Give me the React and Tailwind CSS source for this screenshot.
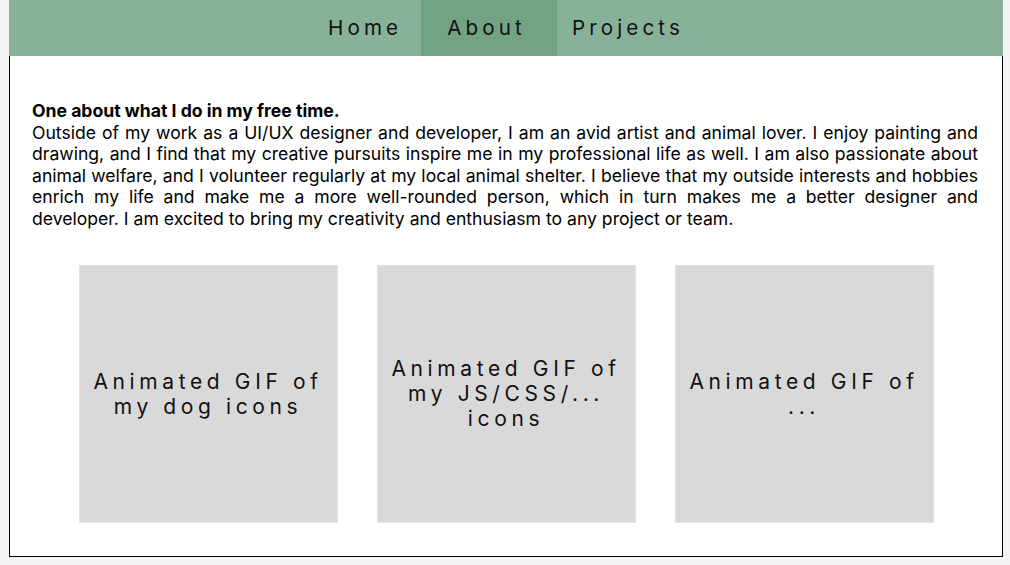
import React from 'react';

const tabs = [
  { label: 'Home', pad: 'pl-[18px] pr-[19px]', active: false },
  { label: 'About', pad: 'pl-[26px] pr-[31px]', active: true },
  { label: 'Projects', pad: 'pl-[15px] pr-[18px]', active: false },
];

const gifs = [
  'Animated GIF of my dog icons',
  'Animated GIF of my JS/CSS/... icons',
  'Animated GIF of ...',
];

export default function App() {
  return (
    <div className="h-[565px] w-full bg-[#f4f4f4] font-['Inter',_'Noto_Sans',_sans-serif] text-black">
      <div className="ml-[9px] w-[994px] h-[557px] bg-white border-x border-b border-black flex flex-col">
        <nav className="h-[56px] -mx-px bg-[#88b19a] flex justify-center">
          {tabs.map((t) => (
            <a
              key={t.label}
              className={`h-full flex items-center ${t.pad} text-[20.6px] tracking-[0.2em] text-[#111] ${
                t.active ? 'bg-[#73a385]' : ''
              }`}
            >
              {t.label}
            </a>
          ))}
        </nav>

        <section className="pt-[44px] pl-[22px] pr-[24px] text-[17.6px] leading-[21.6px] text-justify">
          <h2 className="font-bold">One about what I do in my free time.</h2>
          <p>
            Outside of my work as a UI/UX designer and developer, I am an avid artist and animal lover. I enjoy
            painting and drawing, and I find that my creative pursuits inspire me in my professional life as well. I
            am also passionate about animal welfare, and I volunteer regularly at my local animal shelter. I believe
            that my outside interests and hobbies enrich my life and make me a more well-rounded person, which in turn
            makes me a better designer and developer. I am excited to bring my creativity and enthusiasm to any
            project or team.
          </p>
        </section>

        <div className="mt-[35px] flex justify-center gap-[39px]">
          {gifs.map((g) => (
            <div
              key={g}
              className="w-[259px] h-[258px] bg-[#d9d9d9] border border-[#e2e2e2] flex items-center justify-center px-[10px] text-center text-[21px] leading-[25px] tracking-[0.22em] text-[#111]"
            >
              {g}
            </div>
          ))}
        </div>
      </div>
    </div>
  );
}
